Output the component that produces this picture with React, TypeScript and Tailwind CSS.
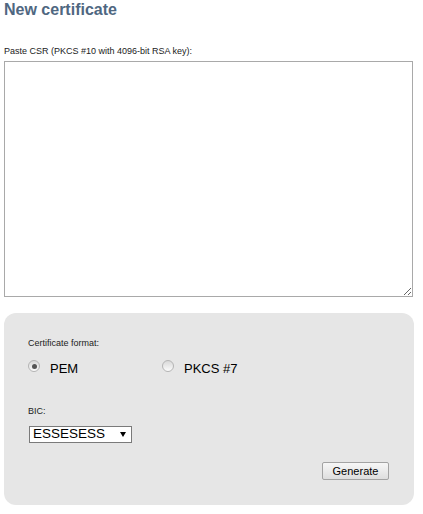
import { useState } from 'react';

function Radio({ checked }: { checked: boolean }) {
  return (
    <span className="relative -mt-[1px] flex h-[12px] w-[12px] shrink-0 items-center justify-center rounded-full border border-[#b4b4b4] bg-gradient-to-b from-[#d9d9d9] to-[#fbfbfb]">
      {checked && <span className="h-[5px] w-[5px] rounded-full bg-[#555555]" />}
    </span>
  );
}

export default function App() {
  const [format, setFormat] = useState<'pem' | 'pkcs7'>('pem');

  return (
    <div className="h-[514px] w-[423px] bg-white px-[4px] font-['Liberation_Sans',Arial,sans-serif] text-black">
      <h1 className="text-[16px] font-bold leading-[20px] text-[#4f6781]">New certificate</h1>

      <label className="mt-[26px] block text-[9px] leading-[11px] text-[#222]">
        Paste CSR (PKCS #10 with 4096-bit RSA key):
      </label>
      <textarea className="mt-[4px] block h-[236px] w-[409px] border border-[#a9a9a9] bg-white outline-none" />

      <div className="mt-[16px] h-[192px] w-[410px] rounded-[12px] bg-[#e6e6e6] pl-[24px] pt-[25px]">
        <div className="text-[9px] leading-[11px] text-[#222]">Certificate format:</div>

        <div className="mt-[12px] flex text-[13px] leading-[16px]">
          <button className="flex w-[134px] items-start gap-[10px]" onClick={() => setFormat('pem')}>
            <Radio checked={format === 'pem'} />
            <span>PEM</span>
          </button>
          <button className="flex items-start gap-[10px]" onClick={() => setFormat('pkcs7')}>
            <Radio checked={format === 'pkcs7'} />
            <span>PKCS #7</span>
          </button>
        </div>

        <div className="mt-[29px] text-[9px] leading-[11px] text-[#222]">BIC:</div>
        <div className="ml-[1px] mt-[9px] flex h-[17px] w-[103px] items-start justify-between border border-[#7a7a7a] bg-white pl-[3px] pr-[5px]">
          <span className="block text-[13.5px] leading-[13px]">ESSESESS</span>
          <svg width="6" height="5" viewBox="0 0 6 5" className="mt-[5px]">
            <path d="M0 0H6L3 5Z" fill="#000" />
          </svg>
        </div>

        <div className="mt-[19px] flex justify-end pr-[25px]">
          <button className="h-[18px] w-[67px] rounded-[2px] border border-[#a3a3a3] bg-gradient-to-b from-[#f7f7f7] to-[#dedede] text-[11px] leading-[16px]">
            Generate
          </button>
        </div>
      </div>
    </div>
  );
}
